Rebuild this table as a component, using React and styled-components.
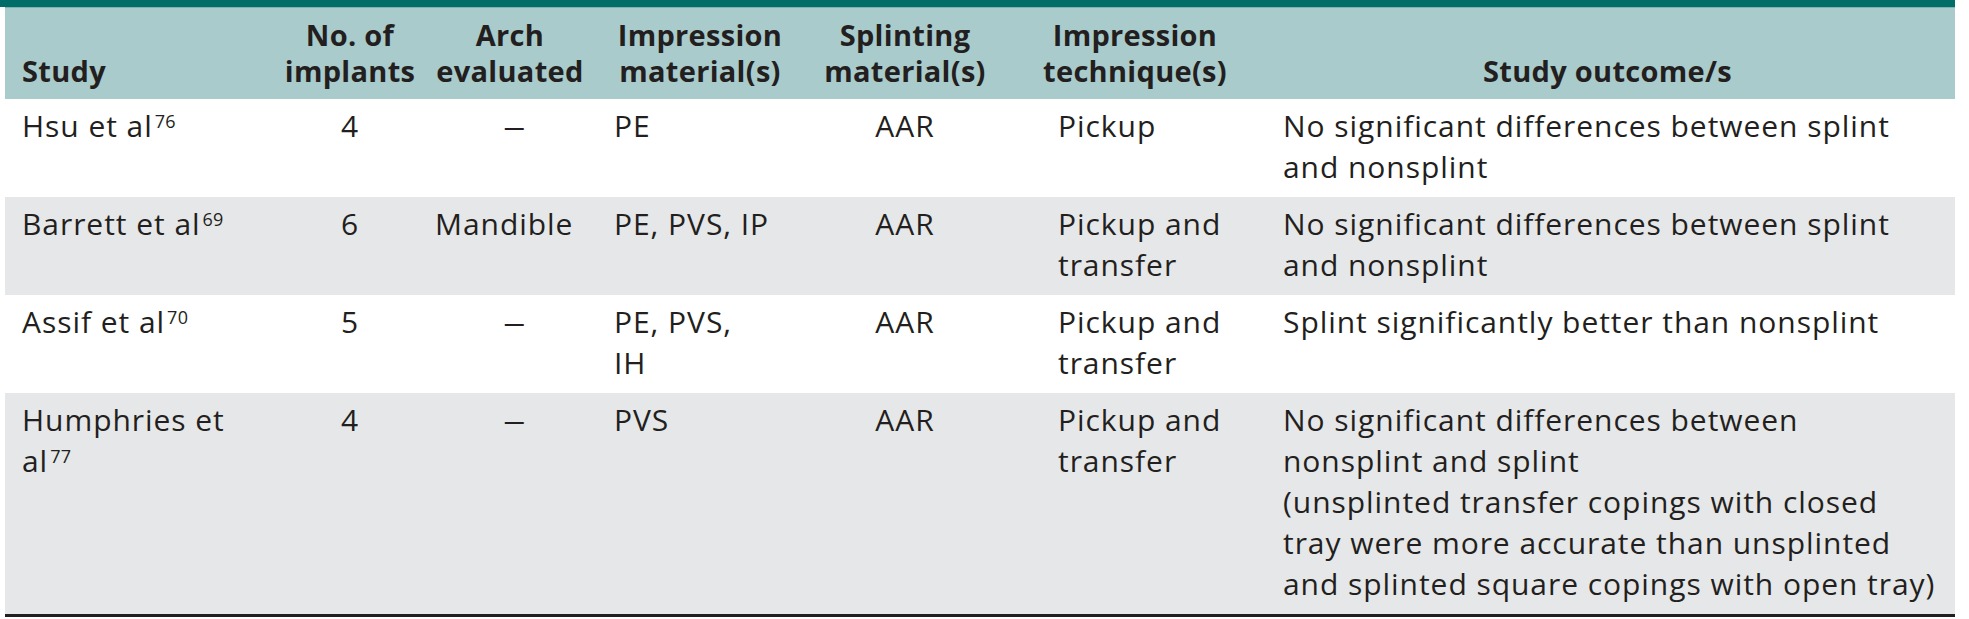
import React from "react";
import styled, { createGlobalStyle } from "styled-components";

const GlobalStyle = createGlobalStyle`
  body {
    margin: 0;
    background: #ffffff;
    font-family: "Open Sans", "Liberation Sans", sans-serif;
    color: #231f20;
  }
`;

const Page = styled.div`
  width: 1950px;
  padding-left: 5px;
  border-top: 7px solid #006d69;
`;

const Table = styled.table`
  width: 1950px;
  table-layout: fixed;
  border-collapse: collapse;
  border-bottom: 3px solid #231f20;
`;

const HeadRow = styled.tr`
  background-color: #a9cbcb;
  border-top: 1px solid #7fb3b1;
`;

const Th = styled.th`
  font-family: "Open Sans", "Liberation Sans", sans-serif;
  font-weight: 700;
  font-size: 29px;
  line-height: 36px;
  letter-spacing: 0.3px;
  color: #231f20;
  vertical-align: bottom;
  text-align: ${(p) => p.$align || "center"};
  padding: 9px 4px 10px ${(p) => p.$pad || 4}px;
`;

const BodyRow = styled.tr`
  background-color: ${(p) => (p.$shade ? "#e6e7e8" : "#ffffff")};
`;

const Td = styled.td`
  font-size: 30px;
  line-height: 41px;
  letter-spacing: 0.95px;
  vertical-align: top;
  text-align: ${(p) => p.$align || "left"};
  padding: 6px 10px 10px ${(p) => p.$pad || 0}px;
`;

const Sup = styled.sup`
  font-size: 18px;
  letter-spacing: 0.3px;
  line-height: 0;
  vertical-align: 9px;
  margin-left: 2px;
`;

const Dash = styled.span`
  display: inline-block;
  transform: scaleX(1.5);
`;

const columns = [275, 140, 180, 200, 210, 250, 695];

const rows = [
  {
    study: "Hsu et al",
    ref: "76",
    implants: "4",
    arch: null,
    material: "PE",
    splint: "AAR",
    technique: "Pickup",
    outcome: ["No significant differences between splint and nonsplint"],
  },
  {
    study: "Barrett et al",
    ref: "69",
    implants: "6",
    arch: "Mandible",
    material: "PE, PVS, IP",
    splint: "AAR",
    technique: "Pickup and transfer",
    outcome: ["No significant differences between splint and nonsplint"],
  },
  {
    study: "Assif et al",
    ref: "70",
    implants: "5",
    arch: null,
    material: ["PE, PVS,", "IH"],
    splint: "AAR",
    technique: "Pickup and transfer",
    outcome: ["Splint significantly better than nonsplint"],
  },
  {
    study: ["Humphries et", "al"],
    ref: "77",
    implants: "4",
    arch: null,
    material: "PVS",
    splint: "AAR",
    technique: "Pickup and transfer",
    outcome: [
      "No significant differences between nonsplint and splint",
      "(unsplinted transfer copings with closed tray were more accurate than unsplinted and splinted square copings with open tray)",
    ],
  },
];

const lines = (value) =>
  Array.isArray(value)
    ? value.map((line, i) => (
        <React.Fragment key={i}>
          {i > 0 && <br />}
          {line}
        </React.Fragment>
      ))
    : value;

export default function App() {
  return (
    <>
      <GlobalStyle />
      <Page>
        <Table>
          <colgroup>
            {columns.map((w, i) => (
              <col key={i} style={{ width: w }} />
            ))}
          </colgroup>
          <thead>
            <HeadRow>
              <Th $align="left" $pad={17}>Study</Th>
              <Th>No. of implants</Th>
              <Th>Arch evaluated</Th>
              <Th>Impression material(s)</Th>
              <Th>Splinting material(s)</Th>
              <Th>Impression technique(s)</Th>
              <Th>Study outcome/s</Th>
            </HeadRow>
          </thead>
          <tbody>
            {rows.map((r, i) => (
              <BodyRow key={i} $shade={i % 2 === 1}>
                <Td $pad={17}>
                  {lines(r.study)}
                  <Sup>{r.ref}</Sup>
                </Td>
                <Td $align="center" $pad={10}>{r.implants}</Td>
                {r.arch ? (
                  <Td $pad={15}>{r.arch}</Td>
                ) : (
                  <Td $align="center" $pad={20}>
                    <Dash>–</Dash>
                  </Td>
                )}
                <Td $pad={14}>{lines(r.material)}</Td>
                <Td $align="center" $pad={10}>{r.splint}</Td>
                <Td $pad={48}>{r.technique}</Td>
                <Td $pad={23}>{lines(r.outcome)}</Td>
              </BodyRow>
            ))}
          </tbody>
        </Table>
      </Page>
    </>
  );
}
